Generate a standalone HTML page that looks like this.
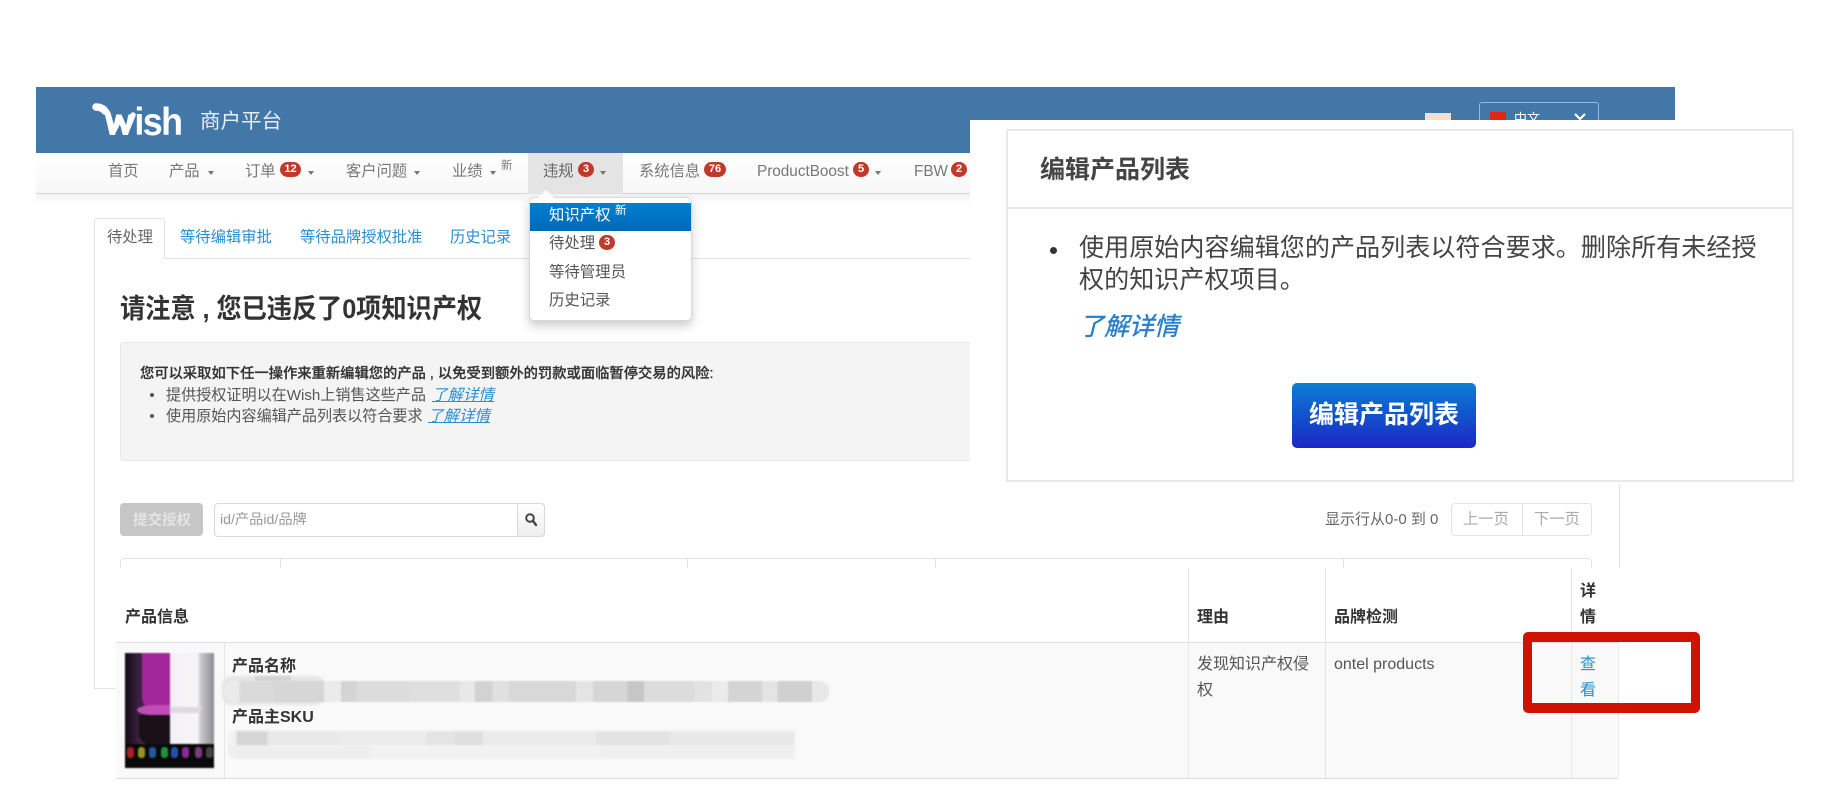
<!DOCTYPE html>
<html lang="zh">
<head>
<meta charset="utf-8">
<title>Wish 商户平台</title>
<style>
html,body{margin:0;padding:0;background:#fff;}
body{width:1847px;height:798px;position:relative;overflow:hidden;font-family:"Liberation Sans","Noto Sans CJK SC",sans-serif;color:#444;}
#p{position:absolute;left:0;top:0;width:1847px;height:798px;overflow:hidden;filter:blur(.35px);}
.b{position:absolute;box-sizing:border-box;}
.t{position:absolute;white-space:nowrap;line-height:20px;height:20px;font-size:15.3px;}
.n{color:#777;}
.l{color:#2a8fd0;}
.c{position:absolute;width:0;height:0;border-left:3.5px solid transparent;border-right:3.5px solid transparent;border-top:4px solid #777;top:171px;}
.r{position:absolute;background:#c0392b;color:#fff;border-radius:8px;font-size:11px;font-weight:bold;text-align:center;height:15px;line-height:15px;}
.h{font-weight:bold;font-size:16px;color:#333;}
</style>
</head>
<body>
<div id="p">

<!-- header -->
<div class="b" style="left:36px;top:87px;width:1639px;height:66px;background:#4377a8;"></div>
<svg class="b" style="left:90px;top:98px;" width="100" height="44" viewBox="90 98 100 44">
<g transform="translate(105,135) scale(.92,1)"><text x="0 32 41 61" y="0" font-family="Liberation Sans" font-weight="bold" font-size="39" fill="#fff">wish</text></g>
<path d="M96 107 Q104 106 108 114 L113 132 L120 118 L126 132 L133 115" fill="none" stroke="#fff" stroke-width="5.5" stroke-linecap="round" stroke-linejoin="round"/>
<path d="M96 107 Q102 107 105 111" fill="none" stroke="#fff" stroke-width="7.5" stroke-linecap="round"/>
</svg>
<div class="t" style="left:200px;top:112px;font-size:20.5px;color:#e8eff6;">商户平台</div>

<!-- behind overlay in header -->
<div class="b" style="left:1425px;top:113px;width:26px;height:10px;background:#f3dfd0;"></div>
<div class="b" style="left:1479px;top:102px;width:120px;height:30px;border:1px solid #9db9d3;border-radius:3px;"></div>
<div class="b" style="left:1490px;top:112px;width:16px;height:10px;background:#de2910;"></div>
<div class="t" style="left:1514px;top:109px;color:#fff;font-size:13px;">中文</div>
<svg class="b" style="left:1573px;top:112px;" width="14" height="10" viewBox="0 0 14 10"><path d="M2 2 L7 7 L12 2" fill="none" stroke="#fff" stroke-width="2.2"/></svg>

<!-- nav -->
<div class="b" style="left:36px;top:153px;width:1639px;height:41px;background:linear-gradient(#fff,#f7f7f7);border-bottom:1px solid #d6d6d6;"></div>
<div class="b" style="left:36px;top:194px;width:1639px;height:10px;background:linear-gradient(#f2f2f2,#fff);"></div>
<div class="b" style="left:528px;top:153px;width:95px;height:41px;background:#e4e4e4;"></div>

<div class="t n" style="left:108px;top:162px;">首页</div>
<div class="t n" style="left:169px;top:162px;">产品</div><div class="c" style="left:207.5px;"></div>
<div class="t n" style="left:245px;top:162px;">订单</div><div class="r" style="left:280px;top:162px;width:21px;">12</div><div class="c" style="left:308px;"></div>
<div class="t n" style="left:346px;top:162px;">客户问题</div><div class="c" style="left:414px;"></div>
<div class="t n" style="left:452px;top:162px;">业绩</div><div class="c" style="left:490px;"></div>
<div class="t n" style="left:501px;top:156px;font-size:11.5px;">新</div>
<div class="t" style="left:543px;top:162px;color:#666;">违规</div><div class="r" style="left:578px;top:162px;width:16px;">3</div><div class="c" style="left:600px;"></div>
<div class="t n" style="left:639px;top:162px;">系统信息</div><div class="r" style="left:704px;top:162px;width:22px;">76</div>
<div class="t n" style="left:757px;top:162px;font-size:15.3px;">ProductBoost</div><div class="r" style="left:853px;top:162px;width:16px;">5</div><div class="c" style="left:875px;"></div>
<div class="t n" style="left:914px;top:162px;">FBW</div><div class="r" style="left:951px;top:162px;width:16px;">2</div>

<!-- panel -->
<div class="b" style="left:94px;top:258px;width:1526px;height:431px;border:1px solid #e2e2e2;"></div>
<div class="b" style="left:94px;top:218px;width:71px;height:41px;background:#fff;border:1px solid #e2e2e2;border-bottom:0;border-radius:3px 3px 0 0;"></div>
<div class="t" style="left:107px;top:228px;color:#666;">待处理</div>
<div class="t l" style="left:180px;top:228px;">等待编辑审批</div>
<div class="t l" style="left:300px;top:228px;">等待品牌授权批准</div>
<div class="t l" style="left:450px;top:228px;">历史记录</div>

<div class="t" style="left:120px;top:299px;font-size:27px;font-weight:bold;color:#333;letter-spacing:-.1px;transform:scaleX(.936);transform-origin:0 50%;">请注意 , 您已违反了0项知识产权</div>

<div class="b" style="left:120px;top:342px;width:1000px;height:119px;background:#f4f4f4;border:1px solid #e9e9e9;border-radius:3px;"></div>
<div class="t" style="left:140px;top:364px;font-size:14.3px;color:#333;font-weight:500;-webkit-text-stroke:.25px #333;">您可以采取如下任一操作来重新编辑您的产品 , 以免受到额外的罚款或面临暂停交易的风险:</div>
<div class="b" style="left:150px;top:393px;width:4px;height:4px;border-radius:50%;background:#555;"></div>
<div class="b" style="left:150px;top:414px;width:4px;height:4px;border-radius:50%;background:#555;"></div>
<div class="t" style="left:166px;top:386px;font-size:15.1px;color:#555;">提供授权证明以在Wish上销售这些产品</div>
<div class="t" style="left:432px;top:386px;font-size:15.5px;font-style:italic;text-decoration:underline;color:#2a8fd0;">了解详情</div>
<div class="t" style="left:166px;top:407px;font-size:15.1px;color:#555;">使用原始内容编辑产品列表以符合要求</div>
<div class="t" style="left:428px;top:407px;font-size:15.5px;font-style:italic;text-decoration:underline;color:#2a8fd0;">了解详情</div>

<div class="b" style="left:120px;top:503px;width:83px;height:33px;background:#c6c6c6;border-radius:4px;"></div>
<div class="t" style="left:133px;top:511px;font-size:14.5px;font-weight:bold;color:#e4e4e4;">提交授权</div>
<div class="b" style="left:214px;top:503px;width:331px;height:34px;border:1px solid #d8d8d8;border-radius:4px;background:#fff;"></div>
<div class="b" style="left:517px;top:503px;width:28px;height:34px;border:1px solid #d8d8d8;border-radius:0 4px 4px 0;background:linear-gradient(#fff,#eee);"></div>
<svg class="b" style="left:524px;top:512px;" width="14" height="15" viewBox="0 0 14 15"><circle cx="6" cy="6" r="3.8" fill="none" stroke="#444" stroke-width="2"/><path d="M9 9 L12 13" stroke="#444" stroke-width="2.4" stroke-linecap="round"/></svg>
<div class="t" style="left:220px;top:510px;font-size:14.2px;color:#999;">id/产品id/品牌</div>

<div class="t" style="left:1325px;top:510px;font-size:15px;color:#666;">显示行从0-0 到 0</div>
<div class="b" style="left:1451px;top:503px;width:141px;height:33px;border:1px solid #e3e3e3;border-radius:4px;"></div>
<div class="b" style="left:1522px;top:503px;width:1px;height:33px;background:#e3e3e3;"></div>
<div class="t" style="left:1463px;top:510px;color:#aaa;">上一页</div>
<div class="t" style="left:1534px;top:510px;color:#aaa;">下一页</div>

<div class="b" style="left:120px;top:558px;width:1472px;height:20px;border:1px solid #e3e3e3;border-radius:4px 4px 0 0;"></div>
<div class="b" style="left:280px;top:558px;width:1px;height:12px;background:#e3e3e3;"></div>
<div class="b" style="left:687px;top:558px;width:1px;height:12px;background:#e3e3e3;"></div>
<div class="b" style="left:935px;top:558px;width:1px;height:12px;background:#e3e3e3;"></div>
<div class="b" style="left:1343px;top:558px;width:1px;height:12px;background:#e3e3e3;"></div>

<!-- overlaid table -->
<div class="b" style="left:116px;top:568px;width:1510px;height:230px;background:#fff;"></div>
<div class="b" style="left:116px;top:642px;width:1502px;height:137px;background:#f9f9f9;border-top:1px solid #e0e0e0;border-bottom:1px solid #dcdcdc;"></div>
<div class="b" style="left:224px;top:642px;width:1px;height:136px;background:#e6e6e6;"></div>
<div class="b" style="left:1188px;top:568px;width:1px;height:210px;background:#e6e6e6;"></div>
<div class="b" style="left:1325px;top:568px;width:1px;height:210px;background:#e6e6e6;"></div>
<div class="b" style="left:1571px;top:568px;width:1px;height:210px;background:#e6e6e6;"></div>
<div class="b" style="left:1618px;top:642px;width:1px;height:136px;background:#ececec;"></div>

<div class="t h" style="left:125px;top:608px;">产品信息</div>
<div class="t h" style="left:1197px;top:608px;">理由</div>
<div class="t h" style="left:1334px;top:608px;">品牌检测</div>
<div class="t h" style="left:1580px;top:582px;">详</div>
<div class="t h" style="left:1580px;top:608px;">情</div>

<!-- product image -->
<div class="b" style="left:125px;top:653px;width:89px;height:115px;overflow:hidden;background:#0c0a0e;filter:blur(.7px);">
  <div class="b" style="left:0;top:0;width:45px;height:91px;background:linear-gradient(90deg,#140814 0,#3a2040 30%,#5a3560 100%);"></div>
  <div class="b" style="left:17px;top:0;width:28px;height:58px;background:#a3269a;border-radius:0 0 0 14px;"></div>
  <div class="b" style="left:12px;top:52px;width:33px;height:10px;border-radius:50% 0 0 50%;background:#c24cb8;"></div>
  <div class="b" style="left:14px;top:62px;width:31px;height:29px;background:#1a1018;border-radius:0 0 0 10px;"></div>
  <div class="b" style="left:45px;top:0;width:44px;height:91px;background:linear-gradient(90deg,#f2f0f4 0,#f6f5f8 62%,#c9c8cd 70%,#8d8b92 100%);"></div>
  <div class="b" style="left:45px;top:54px;width:32px;height:6px;background:#dcdade;border-radius:0 0 8px 0;"></div>
  <div class="b" style="left:0;top:91px;width:89px;height:24px;background:#0a0a0a;"></div>
  <div class="b" style="left:2px;top:94px;width:7px;height:11px;border-radius:3px;background:#a52020;"></div>
  <div class="b" style="left:13px;top:94px;width:7px;height:11px;border-radius:3px;background:#9a9020;"></div>
  <div class="b" style="left:24px;top:94px;width:7px;height:11px;border-radius:3px;background:#1f5a9c;"></div>
  <div class="b" style="left:36px;top:94px;width:7px;height:11px;border-radius:3px;background:#1f9040;"></div>
  <div class="b" style="left:46px;top:94px;width:7px;height:11px;border-radius:3px;background:#2050b0;"></div>
  <div class="b" style="left:57px;top:94px;width:7px;height:11px;border-radius:3px;background:#8a2a98;"></div>
  <div class="b" style="left:70px;top:94px;width:7px;height:11px;border-radius:3px;background:#7a3a80;"></div>
  <div class="b" style="left:81px;top:94px;width:7px;height:11px;border-radius:3px;background:#444;"></div>
</div>

<div class="t h" style="left:232px;top:657px;">产品名称</div>
<div class="t h" style="left:232px;top:708px;">产品主SKU</div>

<!-- blurred bar 1 -->
<div class="b" style="left:222px;top:676px;width:103px;height:29px;border-radius:10px;background:#e6e6e6;filter:blur(1px);"></div>
<div class="b" style="left:255px;top:676px;width:36px;height:5px;background:#d4d4d4;filter:blur(.6px);"></div>
<div class="b" style="left:224px;top:681px;width:605px;height:21px;border-radius:9px;filter:blur(.8px);background:linear-gradient(90deg,#ebebeb 0 2.6%,#dadada 2.6% 8.2%,#d6d6d6 8.2% 16.5%,#ebebeb 16.5% 19.3%,#d4d4d4 19.3% 21.9%,#dcdcdc 21.9% 30.7%,#dfdfdf 30.7% 38.9%,#e8e8e8 38.9% 41.5%,#d2d2d2 41.5% 44.4%,#e0e0e0 44.4% 47%,#d8d8d8 47% 58.2%,#e4e4e4 58.2% 61%,#d6d6d6 61% 66.7%,#c6c6c6 66.7% 69.4%,#dcdcdc 69.4% 77.8%,#e2e2e2 77.8% 80.6%,#ebebeb 80.6% 83.3%,#d4d4d4 83.3% 88.9%,#e4e4e4 88.9% 91.5%,#d0d0d0 91.5% 97.2%,#e8e8e8 97.2% 100%);"></div>

<!-- blurred bar 2 -->
<div class="b" style="left:228px;top:731px;width:567px;height:15px;border-radius:6px 0 0 0;filter:blur(1px);background:linear-gradient(90deg,#f2f2f2 0 1.5%,#d6d6d6 1.5% 7%,#e9e9e9 7% 20%,#ececec 20% 35%,#e4e4e4 35% 40%,#dfdfdf 40% 45%,#ebebeb 45% 65%,#e3e3e3 65% 78%,#e8e8e8 78% 100%);"></div>
<div class="b" style="left:228px;top:746px;width:567px;height:13px;border-radius:0 0 0 10px;filter:blur(1px);background:linear-gradient(90deg,#eeeeee 0 25%,#f2f2f2 25% 66%,#efefef 66% 100%);"></div>

<div class="t" style="left:1197px;top:655px;font-size:16px;color:#555;">发现知识产权侵</div>
<div class="t" style="left:1197px;top:681px;font-size:16px;color:#555;">权</div>
<div class="t" style="left:1334px;top:655px;font-size:16px;color:#555;">ontel products</div>
<div class="t l" style="left:1580px;top:655px;font-size:16px;">查</div>
<div class="t l" style="left:1580px;top:681px;font-size:16px;">看</div>

<!-- red rectangle -->
<div class="b" style="left:1523px;top:632px;width:177px;height:81px;border:solid #d01200;border-width:10px 9px;border-radius:5px;"></div>

<!-- dropdown -->
<div class="b" style="left:529px;top:197px;width:163px;height:124px;background:#fff;border:1px solid #d8d8d8;border-radius:5px;box-shadow:0 5px 10px rgba(0,0,0,.2);"></div>
<svg class="b" style="left:538px;top:190px;" width="16" height="8" viewBox="0 0 16 8"><path d="M0 8 L8 0 L16 8 Z" fill="#fff"/></svg>
<div class="b" style="left:530px;top:203px;width:161px;height:28px;background:linear-gradient(#0080cc,#0068bb);"></div>
<div class="t" style="left:549px;top:206px;color:#fff;font-size:15.4px;">知识产权</div>
<div class="t" style="left:615px;top:201px;color:#fff;font-size:11.5px;">新</div>
<div class="t" style="left:549px;top:234px;color:#555;font-size:15.4px;">待处理</div>
<div class="r" style="left:599px;top:235px;width:16px;">3</div>
<div class="t" style="left:549px;top:263px;color:#555;font-size:15.4px;">等待管理员</div>
<div class="t" style="left:549px;top:291px;color:#555;font-size:15.4px;">历史记录</div>

<!-- overlay card -->
<div class="b" style="left:970px;top:120px;width:877px;height:364px;background:#fff;"></div>
<div class="b" style="left:1006px;top:129px;width:788px;height:353px;border:2px solid #e8e8e8;"></div>
<div class="b" style="left:1007px;top:207px;width:786px;height:2px;background:#e8e8e8;"></div>
<div class="t" style="left:1040px;top:155px;height:30px;line-height:30px;font-size:25px;font-weight:bold;color:#444;">编辑产品列表</div>
<div class="b" style="left:1050px;top:247px;width:7px;height:7px;border-radius:50%;background:#333;"></div>
<div class="t" style="left:1079px;top:232px;height:32px;line-height:32px;font-size:25.1px;color:#444;">使用原始内容编辑您的产品列表以符合要求。删除所有未经授</div>
<div class="t" style="left:1079px;top:264px;height:32px;line-height:32px;font-size:25.1px;color:#444;">权的知识产权项目。</div>
<div class="t" style="left:1079px;top:312px;height:30px;line-height:30px;font-size:25px;font-style:italic;color:#2a7fc9;-webkit-text-stroke:.4px #2a7fc9;">了解详情</div>
<div class="b" style="left:1292px;top:383px;width:184px;height:65px;border-radius:5px;background:linear-gradient(#0a7ed2,#1b27c6);text-align:center;color:#fff;font-size:25px;font-weight:bold;line-height:65px;">编辑产品列表</div>

</div>
</body>
</html>
